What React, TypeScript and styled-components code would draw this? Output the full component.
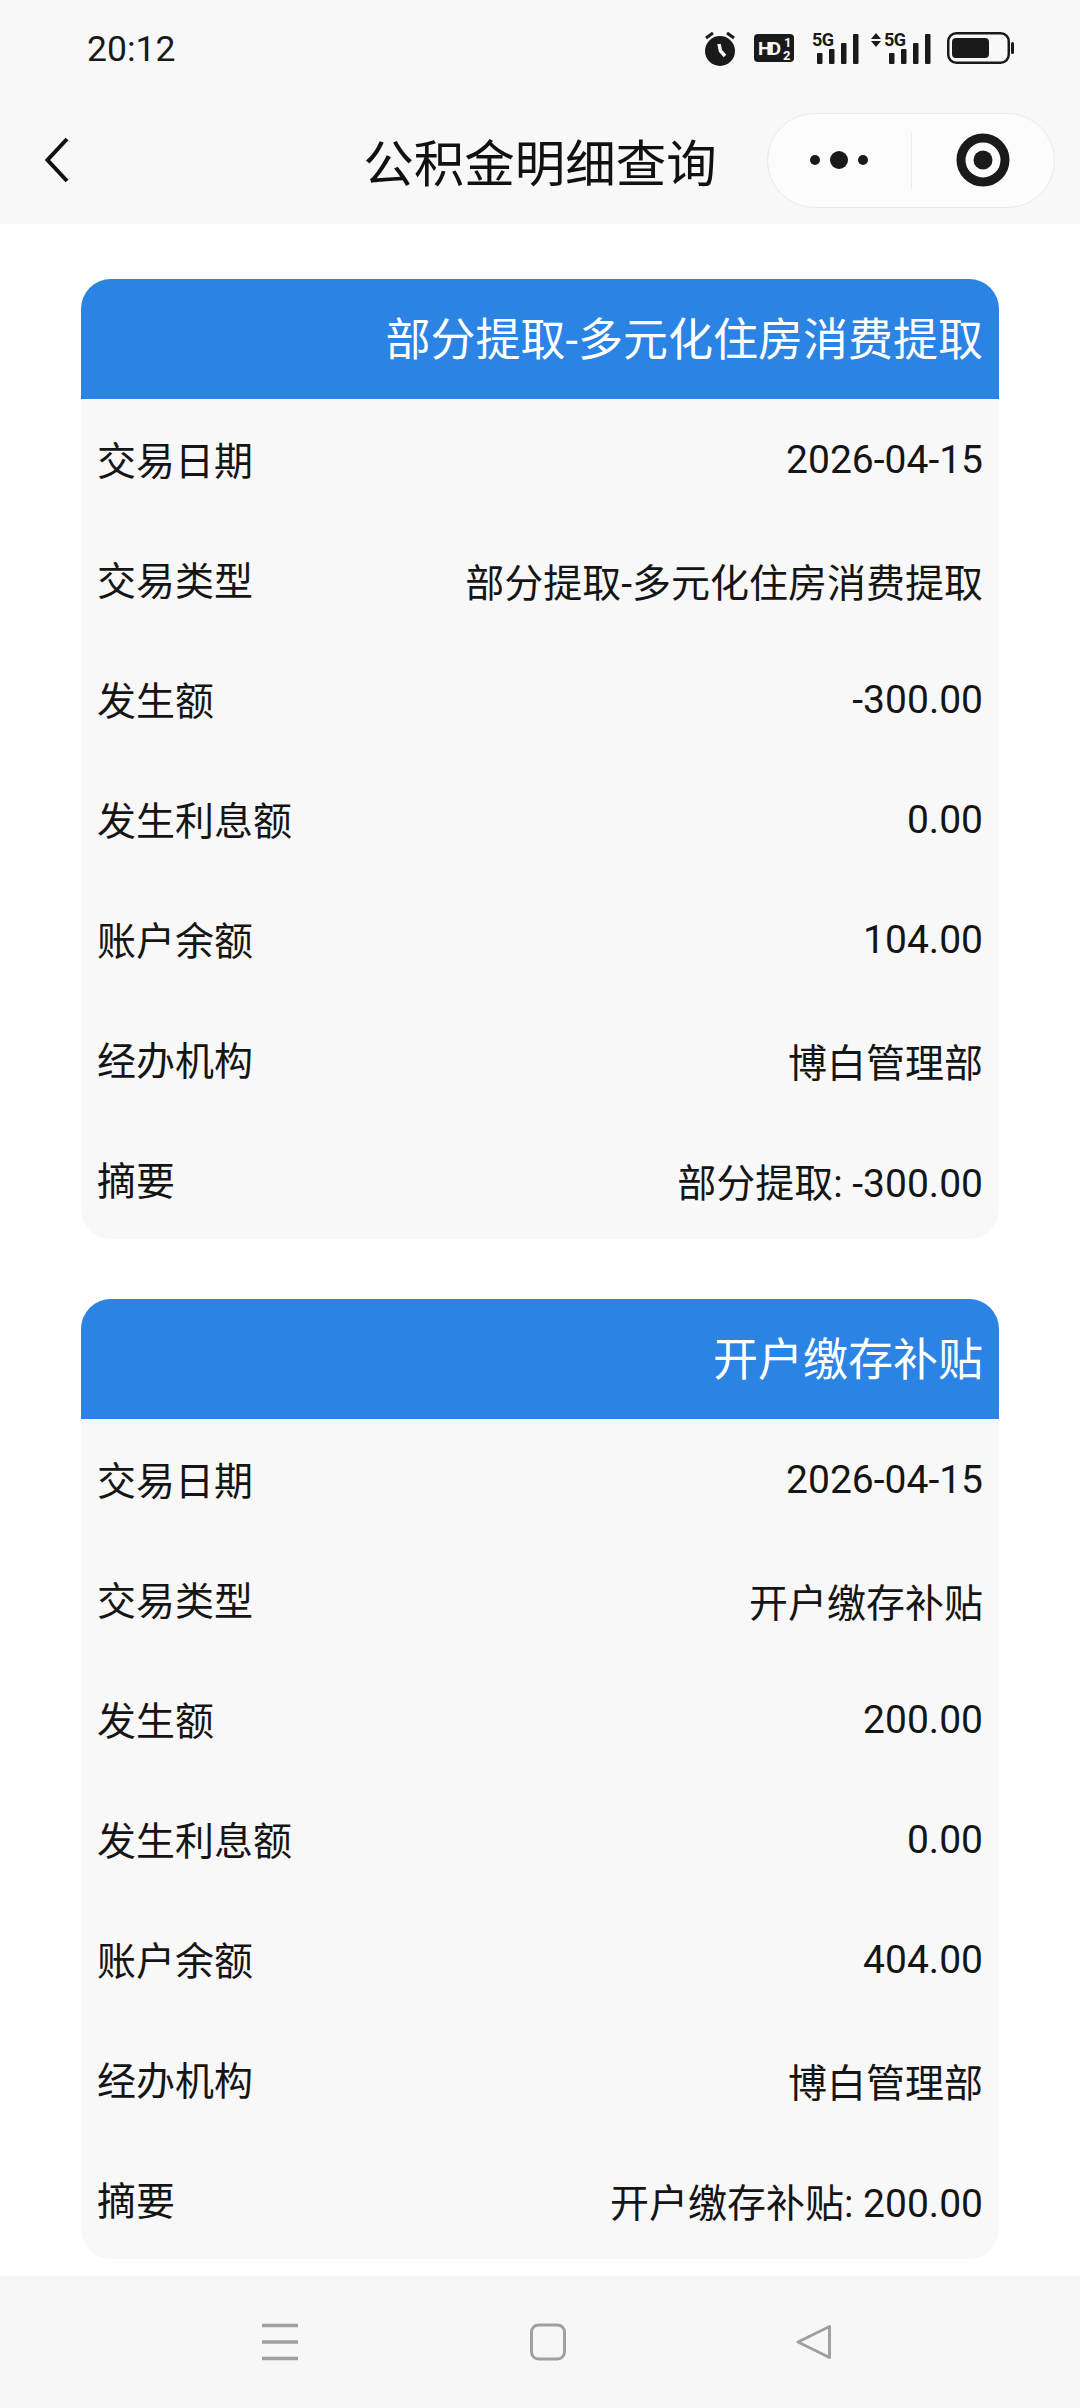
import React from 'react';
import styled, { createGlobalStyle } from 'styled-components';

type Row = { label: string; value: string };
type Record = { title: string; rows: Row[] };

const RECORDS: Record[] = [
  {
    title: '部分提取-多元化住房消费提取',
    rows: [
      { label: '交易日期', value: '2026-04-15' },
      { label: '交易类型', value: '部分提取-多元化住房消费提取' },
      { label: '发生额', value: '-300.00' },
      { label: '发生利息额', value: '0.00' },
      { label: '账户余额', value: '104.00' },
      { label: '经办机构', value: '博白管理部' },
      { label: '摘要', value: '部分提取: -300.00' },
    ],
  },
  {
    title: '开户缴存补贴',
    rows: [
      { label: '交易日期', value: '2026-04-15' },
      { label: '交易类型', value: '开户缴存补贴' },
      { label: '发生额', value: '200.00' },
      { label: '发生利息额', value: '0.00' },
      { label: '账户余额', value: '404.00' },
      { label: '经办机构', value: '博白管理部' },
      { label: '摘要', value: '开户缴存补贴: 200.00' },
    ],
  },
];

const GlobalStyle = createGlobalStyle`
  html, body {
    margin: 0;
    padding: 0;
    background: #fff;
  }
  body {
    font-family: Roboto, "Noto Sans CJK SC", sans-serif;
  }
`;

const Page = styled.div`
  width: 1080px;
  height: 2408px;
  display: flex;
  flex-direction: column;
  overflow: hidden;
  background: #fff;
`;

const Top = styled.header`
  height: 224px;
  flex: none;
  background: #f8f8f8;
  display: flex;
  flex-direction: column;
`;

const StatusBar = styled.div`
  height: 96px;
  padding: 0 66px 0 87px;
  display: flex;
  align-items: center;
  justify-content: space-between;
`;

const Time = styled.span`
  font-size: 35.5px;
  color: #1a1a1a;
  padding-top: 2px;
`;

const StatusIcons = styled.div`
  display: flex;
  align-items: center;
`;

const IconSlot = styled.div<{ $gap?: number }>`
  display: flex;
  margin-right: ${({ $gap }) => $gap ?? 0}px;
`;

const NavBar = styled.div`
  flex: 1;
  display: grid;
  grid-template-columns: 1fr auto 1fr;
  align-items: center;
  padding: 0 25px;
`;

const BackButton = styled.div`
  display: flex;
  align-items: center;
  padding-left: 20px;
`;

const Title = styled.h1`
  margin: 0;
  font-size: 50.5px;
  font-weight: 400;
  color: #111;
  font-family: "Noto Sans CJK SC", sans-serif;
`;

const Capsule = styled.div`
  justify-self: end;
  width: 288px;
  height: 95px;
  box-sizing: border-box;
  border: 1.5px solid #e9e9e9;
  border-radius: 48px;
  background: #fcfcfc;
  display: flex;
  align-items: center;
`;

const CapsulePart = styled.div`
  flex: 1;
  height: 57px;
  display: flex;
  align-items: center;
  justify-content: center;
  & + & {
    border-left: 1.5px solid #ededed;
  }
`;

const Content = styled.main`
  flex: 1;
  padding: 55px 81px 0;
  display: flex;
  flex-direction: column;
  gap: 60px;
`;

const Card = styled.section`
  border-radius: 30px;
  overflow: hidden;
  background: #f8f8f8;
`;

const CardHead = styled.div`
  height: 120px;
  padding: 0 16px 5px;
  box-sizing: border-box;
  display: flex;
  align-items: center;
  justify-content: flex-end;
  background: #2b83e3;
  color: #fff;
  font-size: 45px;
`;

const InfoRow = styled.div`
  height: 120px;
  padding: 0 16px;
  display: flex;
  align-items: center;
  justify-content: space-between;
  font-size: 39px;
  color: #151515;
`;

const RowLabel = styled.span`
  padding-bottom: 3px;
`;

const RowValue = styled.span`
  padding-top: 2px;
`;

const BottomBar = styled.footer`
  height: 132px;
  flex: none;
  background: #f7f7f7;
  display: grid;
  grid-template-columns: 262px 36px 232px 36px 230px 36px;
  align-items: center;
`;

const BarCell = styled.div<{ $col: number }>`
  grid-column: ${({ $col }) => $col};
  display: flex;
`;

const AlarmIcon = () => (
  <svg width="30" height="36" viewBox="0 0 30 36">
    <circle cx="15" cy="21" r="15" fill="#1a1a1a" />
    <path d="M1 8l7-5M29 8l-7-5" stroke="#1a1a1a" strokeWidth="3" />
    <path d="M14 14l1.500 7 4.500 5" stroke="#f8f8f8" strokeWidth="3.500" fill="none" />
  </svg>
);

const HdIcon = () => (
  <svg width="40" height="28" viewBox="0 0 40 28">
    <rect width="40" height="28" rx="4" fill="#1a1a1a" />
    <text x="4" y="21" fontSize="19" fontWeight="700" fill="#f8f8f8" fontFamily="Roboto" textLength="23">HD</text>
    <text x="30" y="13" fontSize="13" fontWeight="700" fill="#f8f8f8" fontFamily="Roboto">1</text>
    <text x="29" y="26" fontSize="13" fontWeight="700" fill="#f8f8f8" fontFamily="Roboto">2</text>
  </svg>
);

const SignalIcon = ({ arrows }: { arrows?: boolean }) => (
  <svg width={arrows ? 60 : 47} height="46" viewBox={arrows ? '-13 -6 60 46' : '0 -6 47 46'}>
    {arrows && <path d="M-13 8l5-6 5 6zM-13 10l5 6 5-6z" fill="#1a1a1a" />}
    <text x="0" y="15" fontSize="18" fontWeight="700" fill="#1a1a1a" fontFamily="Roboto" textLength="22">5G</text>
    <rect x="5" y="22" width="5.500" height="11" rx="1" fill="#1a1a1a" />
    <rect x="17" y="18" width="5.500" height="15" rx="1" fill="#1a1a1a" />
    <rect x="29" y="12" width="5.500" height="21" rx="1" fill="#1a1a1a" />
    <rect x="41" y="3" width="5.500" height="30" rx="1" fill="#1a1a1a" />
  </svg>
);

const BatteryIcon = () => (
  <svg width="67" height="32" viewBox="0 0 67 32">
    <rect x="1.250" y="1.250" width="60.500" height="29.500" rx="8" fill="none" stroke="#1a1a1a" strokeWidth="2.500" />
    <rect x="5" y="6" width="37" height="20" rx="4" fill="#1a1a1a" />
    <rect x="64" y="10" width="3" height="12" rx="1.500" fill="#1a1a1a" />
  </svg>
);

const App: React.FC = () => (
  <Page>
    <GlobalStyle />
    <Top>
      <StatusBar>
        <Time>20:12</Time>
        <StatusIcons>
          <IconSlot $gap={19}><AlarmIcon /></IconSlot>
          <IconSlot $gap={18}><HdIcon /></IconSlot>
          <IconSlot $gap={12}><SignalIcon /></IconSlot>
          <IconSlot $gap={16}><SignalIcon arrows /></IconSlot>
          <IconSlot><BatteryIcon /></IconSlot>
        </StatusIcons>
      </StatusBar>
      <NavBar>
        <BackButton>
          <svg width="24" height="46" viewBox="0 0 24 46">
            <path d="M22 2L2.500 23 22 44" fill="none" stroke="#111" strokeWidth="4" />
          </svg>
        </BackButton>
        <Title>公积金明细查询</Title>
        <Capsule>
          <CapsulePart>
            <svg width="58" height="20" viewBox="0 0 58 20">
              <circle cx="5" cy="10" r="5" fill="#1a1a1a" />
              <circle cx="29" cy="10" r="9" fill="#1a1a1a" />
              <circle cx="53" cy="10" r="5" fill="#1a1a1a" />
            </svg>
          </CapsulePart>
          <CapsulePart>
            <svg width="54" height="54" viewBox="0 0 54 54">
              <circle cx="27" cy="27" r="22" fill="none" stroke="#1a1a1a" strokeWidth="9" />
              <circle cx="27" cy="27" r="9.500" fill="#1a1a1a" />
            </svg>
          </CapsulePart>
        </Capsule>
      </NavBar>
    </Top>
    <Content>
      {RECORDS.map((record) => (
        <Card key={record.title}>
          <CardHead>{record.title}</CardHead>
          {record.rows.map((row) => (
            <InfoRow key={row.label}>
              <RowLabel>{row.label}</RowLabel>
              <RowValue>{row.value}</RowValue>
            </InfoRow>
          ))}
        </Card>
      ))}
    </Content>
    <BottomBar>
      <BarCell $col={2}>
        <svg width="36" height="38" viewBox="0 0 36 38">
          <path d="M0 2.500h36M0 19h36M0 35.500h36" stroke="#a0a0a0" strokeWidth="3.500" />
        </svg>
      </BarCell>
      <BarCell $col={4}>
        <svg width="36" height="38" viewBox="0 0 36 38">
          <rect x="1.500" y="2" width="33" height="34" rx="7" fill="none" stroke="#a0a0a0" strokeWidth="3" />
        </svg>
      </BarCell>
      <BarCell $col={6}>
        <svg width="36" height="38" viewBox="0 0 36 38">
          <path d="M33.500 3.500v31L2 19z" fill="none" stroke="#a0a0a0" strokeWidth="3" strokeLinejoin="round" />
        </svg>
      </BarCell>
    </BottomBar>
  </Page>
);

export default App;
